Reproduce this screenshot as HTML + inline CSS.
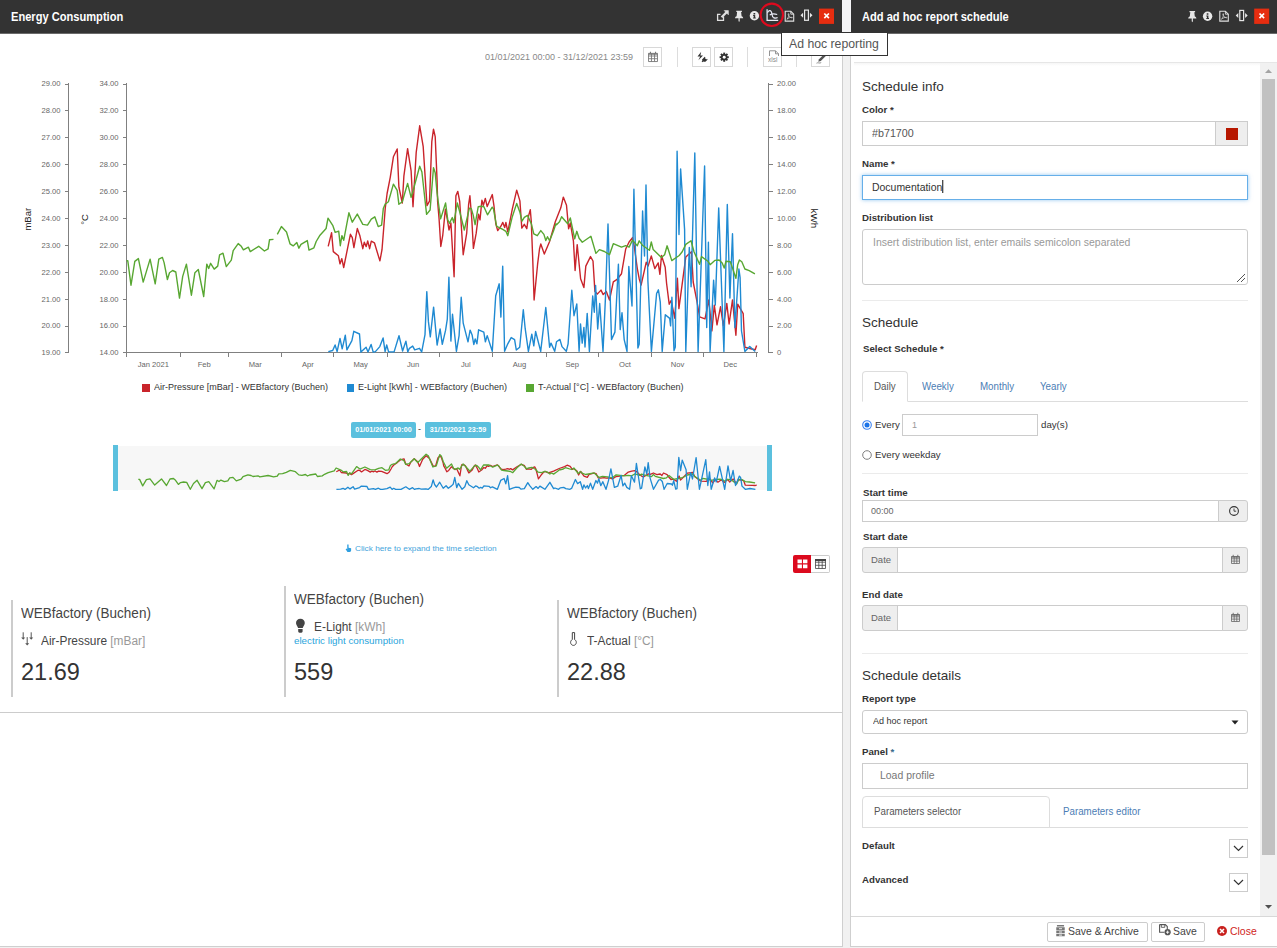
<!DOCTYPE html>
<html><head><meta charset="utf-8">
<style>
*{box-sizing:border-box;margin:0;padding:0}
html,body{width:1277px;height:948px;overflow:hidden;background:#f1f1f1;font-family:"Liberation Sans",sans-serif;}
.abs{position:absolute}
#left{position:absolute;left:0;top:0;width:843px;height:947px;background:#fff;border-right:1px solid #cfcfcf;border-bottom:1px solid #cfcfcf}
#gut{position:absolute;left:843px;top:0;width:7px;height:948px;background:#f1f1f1}
#right{position:absolute;left:850px;top:0;width:427px;height:948px;background:#fff;border-left:1px solid #cfcfcf}
.hdr span{transform:scaleX(.925);transform-origin:0 50%}

.sx{display:inline-block;transform:scaleX(.95);transform-origin:0 50%}
.tab{transform:scaleX(.975);transform-origin:0 50%}
.sm{transform:scaleX(1.02);transform-origin:0 50%}
.btn{transform:scaleX(.95);transform-origin:0 50%}
.hdr{position:absolute;left:0;top:0;height:33px;background:#333333;color:#fff;font-weight:bold;font-size:12px;line-height:33px}
.t{position:absolute;white-space:nowrap}
.lbl{margin-top:0;position:absolute;font-size:9.700px;font-weight:bold;color:#333;white-space:nowrap;line-height:12px}
.h4{position:absolute;font-size:13.500px;color:#333;white-space:nowrap;line-height:18px}
.inp{position:absolute;border:1px solid #ccc;background:#fff;font-size:11px;color:#555;white-space:nowrap}
.addon{position:absolute;border:1px solid #ccc;background:#eee}
.hr{position:absolute;height:1px;background:#ebebeb}
.tb{position:absolute;width:19px;height:20px;border:1px solid #d8d8d8;background:#fff;top:47px}
.sep{position:absolute;width:1px;background:#ddd;top:47px;height:20px}
.tab{font-size:10px;line-height:12px}
.sm{font-size:9.500px;line-height:12px;color:#333}
.btn{font-size:11px;line-height:14px;color:#444}
.lg{font-size:9.5px;line-height:12px;color:#333;transform:scaleX(.95);transform-origin:0 50%}
.badge{background:#5bc0de;border-radius:2px;color:#fff;font-weight:bold;font-size:7.200px;line-height:16px;text-align:center;white-space:nowrap}
.c1{margin-top:1px;font-size:14px;line-height:17px;color:#444;transform:scaleX(.965);transform-origin:0 50%}
.c2{margin-top:1px;font-size:12px;line-height:15px;color:#444;transform:scaleX(.99);transform-origin:0 50%}
.c3{margin-top:1px;font-size:23.5px;line-height:28px;color:#333}
</style></head><body>
<div id="left">
  <div class="hdr" style="width:842px"><span class="t" style="left:11px;top:1px">Energy Consumption</span></div>
  <!--LC_START-->
  <div id="licons"></div>
  <!-- toolbar -->
  <div class="t" id="daterange" style="left:485px;top:51px;font-size:9.5px;line-height:11px;color:#888;transform:scaleX(.947);transform-origin:0 50%">01/01/2021 00:00 - 31/12/2021 23:59</div>
  <div class="tb" style="left:643px"><svg class="abs" style="left:4px;top:3px" width="10" height="12" viewBox="0 0 11 13"><path d="M.5 2.500H10.500V11.500H.5z M.5 5.400H10.500 M.5 8.400H10.500 M3.800 2.500V11.500 M7.200 2.500V11.500" stroke="#777" stroke-width="1" fill="none"/><path d="M.5 2.500H10.500V4H.5z" fill="#777"/><path d="M2.700.8V3M8.300.8V3" stroke="#777" stroke-width="1.200"/></svg></div>
  <div class="sep" style="left:677px"></div>
  <div class="tb" style="left:692px"><svg class="abs" style="left:3px;top:3px" width="13" height="13"><path d="M5.200.8 1.500 5.600H4.200L2.400 9.200 7 4.500H4.400z" fill="#333"/><path d="M6.300 8.200 8 6.500 8.800 5.700 9.500 6.400 8.900 7 10.300 8.400 11 7.800 11.600 8.500 10 10.200C9.200 11 8 11 7.200 10.400L6.300 11.300 5.600 10.600 6.500 9.700C6 9.300 6 8.600 6.300 8.200z" fill="#333"/></svg></div>
  <div class="tb" style="left:714px"><svg class="abs" style="left:3.500px;top:4px" width="10.400" height="10.400" viewBox="-6 -6 12 12"><g fill="#333"><circle r="3.800"/><g id="gt"><rect x="-1.100" y="-5.300" width="2.200" height="10.600"/></g><use href="#gt" transform="rotate(45)"/><use href="#gt" transform="rotate(90)"/><use href="#gt" transform="rotate(135)"/></g><circle r="1.700" fill="#fff"/></svg></div>
  <div class="sep" style="left:747px"></div>
  <div class="tb" style="left:763px"><svg class="abs" style="left:4px;top:2px" width="12" height="14"><path d="M1.500 6V.8H7.500L10.500 3.800V6 M7.500.8V3.800H10.500" stroke="#888" stroke-width=".9" fill="none"/><text x="0" y="11.800" font-size="6.500" fill="#888" font-family="Liberation Sans, sans-serif">xlsl</text></svg></div>
  <div class="sep" style="left:796px"></div>
  <div class="tb" style="left:811px"><svg class="abs" style="left:3px;top:3px" width="13" height="13"><path d="M3.200 10.800 4 8.200 9.500 2.700 11.300 4.500 5.800 10z" fill="#555"/><path d="M1.500 12.200C3 11 4.500 12.800 6.200 11.600" stroke="#777" stroke-width=".8" fill="none"/></svg></div>

  <!-- main chart -->
  <svg id="chart" class="abs" style="left:0;top:70px" width="842" height="430" viewBox="0 70 842 430" font-family="Liberation Sans, sans-serif">
    <g id="axes" stroke="#808080" stroke-width="1" fill="none" shape-rendering="crispEdges">
      <path d="M68.5 83V352.5 M126.5 83V352.5 M768.5 83V352.5 M126 352.5H757.5"/>
      <g id="ticks"><path d="M64.5 84.5H68.5 M122.5 84.5H126.5 M768.5 84.5H772.5 M64.5 110.5H68.5 M122.5 110.5H126.5 M768.5 110.5H772.5 M64.5 137.5H68.5 M122.5 137.5H126.5 M768.5 137.5H772.5 M64.5 164.5H68.5 M122.5 164.5H126.5 M768.5 164.5H772.5 M64.5 191.5H68.5 M122.5 191.5H126.5 M768.5 191.5H772.5 M64.5 218.5H68.5 M122.5 218.5H126.5 M768.5 218.5H772.5 M64.5 245.5H68.5 M122.5 245.5H126.5 M768.5 245.5H772.5 M64.5 272.5H68.5 M122.5 272.5H126.5 M768.5 272.5H772.5 M64.5 299.5H68.5 M122.5 299.5H126.5 M768.5 299.5H772.5 M64.5 326.5H68.5 M122.5 326.5H126.5 M768.5 326.5H772.5 M64.5 352.5H68.5 M122.5 352.5H126.5 M768.5 352.5H772.5 M126.5 352.5V357 M180.5 352.5V357 M228.5 352.5V357 M281.5 352.5V357 M333.5 352.5V357 M387.5 352.5V357 M439.5 352.5V357 M492.5 352.5V357 M546.5 352.5V357 M598.5 352.5V357 M651.5 352.5V357 M703.5 352.5V357 M756.5 352.5V357"/></g>
    </g>
    <g id="axlabels" font-size="7.6" fill="#666"><text x="60.5" y="86.3" text-anchor="end">29.00</text><text x="118.5" y="86.3" text-anchor="end">34.00</text><text x="777" y="86.3">20.00</text><text x="60.5" y="113.2" text-anchor="end">28.00</text><text x="118.5" y="113.2" text-anchor="end">32.00</text><text x="777" y="113.2">18.00</text><text x="60.5" y="140.1" text-anchor="end">27.00</text><text x="118.5" y="140.1" text-anchor="end">30.00</text><text x="777" y="140.1">16.00</text><text x="60.5" y="167.0" text-anchor="end">26.00</text><text x="118.5" y="167.0" text-anchor="end">28.00</text><text x="777" y="167.0">14.00</text><text x="60.5" y="193.9" text-anchor="end">25.00</text><text x="118.5" y="193.9" text-anchor="end">26.00</text><text x="777" y="193.9">12.00</text><text x="60.5" y="220.8" text-anchor="end">24.00</text><text x="118.5" y="220.8" text-anchor="end">24.00</text><text x="777" y="220.8">10.00</text><text x="60.5" y="247.7" text-anchor="end">23.00</text><text x="118.5" y="247.7" text-anchor="end">22.00</text><text x="777" y="247.7">8.00</text><text x="60.5" y="274.6" text-anchor="end">22.00</text><text x="118.5" y="274.6" text-anchor="end">20.00</text><text x="777" y="274.6">6.00</text><text x="60.5" y="301.5" text-anchor="end">21.00</text><text x="118.5" y="301.5" text-anchor="end">18.00</text><text x="777" y="301.5">4.00</text><text x="60.5" y="328.4" text-anchor="end">20.00</text><text x="118.5" y="328.4" text-anchor="end">16.00</text><text x="777" y="328.4">2.00</text><text x="60.5" y="355.3" text-anchor="end">19.00</text><text x="118.5" y="355.3" text-anchor="end">14.00</text><text x="777" y="355.3">0</text><text x="153.3" y="367.3" text-anchor="middle">Jan 2021</text><text x="204.2" y="367.3" text-anchor="middle">Feb</text><text x="255.2" y="367.3" text-anchor="middle">Mar</text><text x="307.9" y="367.3" text-anchor="middle">Apr</text><text x="360.6" y="367.3" text-anchor="middle">May</text><text x="413.2" y="367.3" text-anchor="middle">Jun</text><text x="465.9" y="367.3" text-anchor="middle">Jul</text><text x="519.5" y="367.3" text-anchor="middle">Aug</text><text x="572.2" y="367.3" text-anchor="middle">Sep</text><text x="624.9" y="367.3" text-anchor="middle">Oct</text><text x="677.5" y="367.3" text-anchor="middle">Nov</text><text x="730.2" y="367.3" text-anchor="middle">Dec</text></g>
    <g id="series" fill="none" stroke-width="1.4" stroke-linejoin="round"><path d="M328.2 246.3 L331.6 232.7 L333.3 251.6 L338.4 255.8 L340.0 263.9 L341.8 258.6 L343.7 267.5 L350.4 234.3 L352.3 237.7 L353.9 247.6 L357.3 228.5 L359.9 235.8 L362.8 248.7 L364.3 242.2 L366.2 246.6 L367.7 240.9 L369.6 248.7 L371.3 241.1 L374.4 242.8 L379.9 260.9 L382.0 249.7 L383.9 225.7 L385.2 208.7 L387.1 193.5 L390.3 177.1 L393.4 156.8 L397.2 149.0 L398.9 187.2 L402.3 203.0 L403.9 175.8 L407.6 148.6 L411.1 170.8 L413.0 206.8 L416.2 152.4 L419.7 125.8 L423.2 146.7 L427.0 205.6 L429.5 201.1 L431.8 141.6 L433.5 129.2 L435.2 136.6 L437.1 180.9 L437.6 201.5 L439.1 219.2 L440.8 246.5 L442.7 235.7 L445.4 209.1 L447.3 219.2 L449.0 230.0 L450.9 223.0 L454.1 276.8 L455.9 195.8 L457.8 191.4 L459.7 201.5 L463.2 254.7 L466.7 233.2 L468.6 204.7 L469.9 195.8 L471.8 219.2 L473.4 248.4 L476.2 233.2 L478.5 214.2 L480.0 219.9 L481.9 200.3 L483.4 205.3 L485.3 198.4 L487.2 206.6 L492.3 194.6 L493.9 205.3 L495.8 223.7 L497.7 230.6 L500.9 226.2 L502.8 222.4 L504.7 227.5 L505.9 222.4 L507.8 231.9 L512.3 209.1 L516.7 190.1 L519.9 200.9 L521.8 228.1 L524.3 224.3 L526.8 228.7 L528.5 216.1 L530.3 209.7 L531.3 221.8 L532.8 261.0 L534.1 300.0 L537.6 264.2 L539.5 249.0 L540.8 243.9 L544.3 254.1 L549.6 241.4 L555.3 221.8 L560.8 207.8 L563.3 197.1 L566.5 205.3 L568.6 228.7 L570.3 223.0 L573.4 240.8 L575.1 270.5 L577.2 244.6 L580.6 278.7 L583.9 287.6 L585.8 266.1 L590.5 256.6 L593.0 261.0 L594.9 291.4 L597.5 293.9 L601.0 290.1 L603.2 294.6 L606.3 291.4 L609.5 300.0 L613.3 281.9 L617.1 279.4 L621.5 273.7 L625.7 249.0 L629.1 242.0 L632.5 237.6 L634.2 245.8 L637.3 268.6 L639.2 278.7 L641.1 285.1 L646.2 262.3 L648.1 266.1 L651.3 255.9 L654.8 268.6 L658.2 262.9 L659.9 274.3 L661.5 255.5 L665.2 267.3 L666.6 283.5 L669.2 304.2 L671.1 300.5 L674.8 318.2 L677.4 278.3 L678.9 308.6 L685.8 256.9 L691.5 251.8 L693.2 282.0 L696.9 301.2 L699.6 316.8 L705.0 318.9 L708.8 299.9 L711.9 330.9 L714.3 305.1 L717.0 324.9 L720.5 306.8 L723.4 325.8 L726.8 303.4 L729.1 324.0 L732.5 299.9 L735.9 335.2 L737.7 304.2 L743.2 313.7 L744.9 347.3 L751.8 349.0 L755.2 349.8 L756.6 345.5" stroke="#c9242b"/><path d="M328.3 351.6 L332.7 350.5 L335.1 345.0 L337.1 351.6 L340.0 338.4 L342.2 348.8 L345.3 335.1 L346.9 349.9 L351.9 340.6 L353.8 331.3 L359.5 334.0 L360.9 352.1 L366.1 347.2 L368.0 351.9 L371.1 344.4 L373.2 352.1 L375.4 351.6 L379.8 346.6 L383.1 337.9 L385.1 351.6 L386.7 345.0 L388.6 351.9 L394.1 351.9 L399.0 335.7 L402.6 351.0 L405.9 341.1 L407.8 351.9 L409.4 348.3 L412.7 346.1 L414.7 349.9 L419.5 348.3 L421.7 351.9 L425.0 334.6 L426.8 291.6 L428.4 321.4 L430.3 336.8 L433.6 307.1 L437.1 345.0 L440.1 328.9 L442.3 344.4 L445.6 330.2 L447.3 319.2 L448.9 277.3 L450.9 341.1 L452.5 314.3 L456.4 351.3 L459.1 335.6 L461.2 297.2 L463.2 323.2 L468.0 341.8 L470.1 330.1 L472.1 334.9 L473.8 344.5 L475.2 339.0 L476.9 343.8 L478.6 329.8 L483.8 332.2 L485.4 341.8 L487.2 335.6 L492.3 351.3 L495.7 295.8 L499.2 283.8 L500.9 317.1 L502.7 266.3 L504.6 351.3 L507.8 343.8 L511.2 337.6 L514.6 339.7 L516.3 350.0 L519.7 347.2 L523.3 309.8 L525.2 328.7 L528.4 351.3 L531.8 334.2 L533.8 345.9 L535.6 331.5 L540.7 351.3 L545.8 307.5 L549.6 347.2 L551.0 343.1 L554.7 351.3 L556.5 341.8 L559.9 339.4 L562.0 346.6 L566.3 351.3 L568.1 343.8 L571.8 290.3 L574.0 315.7 L576.8 304.0 L579.1 351.3 L580.5 323.9 L582.2 343.1 L583.9 327.4 L585 347 L587.2 313.4 L589.4 351.4 L592.7 296 L594.3 312.2 L595.6 285.4 L597.7 329 L599.7 303.5 L603 351.4 L605.5 296.6 L608 224 L611.5 339.6 L614.9 332.1 L618.4 264.3 L620.2 329.6 L622 312.8 L624.2 339.6 L627 351.4 L628.8 266.4 L632 306 L633.9 189.2 L637.9 348 L639.2 344 L642.6 211 L644.5 256 L646 185 L647.9 281 L651.4 351.4 L656.6 293.5 L658.4 289.8 L660.3 302.2 L662.2 351.4 L665.3 314.7 L669.7 318.4 L670.6 325.9 L671.9 297.3 L674 350.8 L675.3 347 L677.1 151.2 L679 234.6 L680.6 168.9 L684.6 229.6 L685.8 351.4 L689.3 247.5 L691.1 286.7 L694.8 153 L698.1 351.5 L704.6 166 L706.7 327.5 L708.4 242.3 L710.1 351.5 L713.6 280.2 L715.3 305 L718.7 207.9 L723.9 351.5 L727.3 204.5 L729.9 298 L732.5 233.7 L734.9 327.5 L738.9 269 L740.1 277.6 L741.5 331 L744.9 351.5 L749.7 346.4 L755.2 351.5" stroke="#1f8ad2"/><path d="M126.5 260.8 L127.8 260.8 L131.0 285.2 L134.8 261.4 L138.4 258.6 L143.2 282.1 L150.1 259.1 L155.2 283.9 L158.8 259.2 L162.4 257.4 L164.1 262.6 L167.4 279.5 L169.5 272.7 L172.6 270.5 L175.8 272.0 L179.5 298.1 L182.7 276.4 L186.4 264.1 L191.4 295.2 L194.9 272.7 L198.3 269.5 L203.7 296.5 L206.8 264.1 L208.7 268.6 L210.6 263.3 L214.2 269.1 L217.7 266.1 L219.6 254.9 L223.0 253.2 L226.3 266.6 L231.3 260.1 L233.2 250.7 L238.2 243.6 L241.3 246.3 L243.4 249.8 L248.4 247.2 L250.3 251.6 L258.7 246.3 L264.4 251.0 L268.1 248.8 L269.5 239.8 L273.5 239.4" stroke="#58a732"/><path d="M277.3 234.3 L281.4 226.6 L286.5 232.0 L290.0 243.8 L293.2 245.9 L296.8 242.4 L298.9 248.2 L301.0 244.4 L307.3 240.6 L309.0 250.1 L313.9 247.8 L316.2 241.5 L320.0 235.2 L326.1 228.5 L328.0 218.1 L332.9 225.7 L335.2 232.4 L338.7 231.1 L340.3 245.7 L341.9 235.6 L343.7 240.3 L348.9 212.8 L352.3 222.2 L357.3 214.1 L362.8 224.4 L367.5 225.1 L371.3 219.1 L374.8 216.8 L378.2 226.6 L381.6 225.1 L383.3 208.6 L385.2 203.9 L385.8 203.7 L388.4 201.8 L393.4 184.1 L397.2 190.4 L398.9 204.3 L402.3 201.8 L407.6 183.4 L411.1 197.3 L413.0 191.0 L419.7 166.3 L421.9 172.0 L426.6 214.4 L430.1 210.0 L433.5 167.6 L435.2 172.7 L437.1 193.5 L440.6 218.9 L445.6 203.0 L447.8 220.1 L449.7 223.3 L451.0 220.1 L452.3 217.6 L453.8 222.7 L457.3 203.0 L459.9 212.5 L464.3 230.0 L469.4 208.1 L471.3 208.7 L473.2 215.1 L475.1 224.6 L478.2 206.8 L481.4 206.2 L483.9 206.8 L487.5 214.8 L492.2 207.2 L493.4 208.7 L496.6 226.2 L499.0 227.5 L502.8 229.4 L505.9 231.3 L507.8 235.7 L512.3 216.7 L516.7 203.4 L519.9 212.3 L522.0 221.1 L524.3 217.3 L527.5 215.4 L531.3 223.7 L533.8 233.8 L537.3 235.7 L540.8 230.6 L543.9 234.4 L545.8 240.5 L547.5 236.7 L549.6 240.8 L553.4 231.3 L555.9 223.7 L556.3 224.9 L559.5 221.8 L561.6 216.7 L567.7 223.7 L570.3 218.0 L574.7 238.9 L576.8 231.3 L579.1 238.2 L582.3 242.3 L590.9 236.3 L595.9 253.4 L599.4 249.6 L604.4 251.5 L609.5 254.7 L613.3 243.7 L621.5 247.1 L625.7 245.6 L629.1 247.1 L632.5 240.1 L637.3 245.8 L639.2 240.8 L642.4 245.2 L649.4 250.3 L651.3 242.0 L653.2 249.6 L661.4 257.5 L664.6 254.7 L667.1 245.8 L671.8 260.6 L679.2 255.5 L682.2 251.8 L685.8 244.4 L691.0 240.7 L694.0 251.8 L699.6 264.3 L701.5 256.6 L707.9 261.2 L710.1 264.7 L714.8 260.4 L719.1 260.0 L722.2 263.0 L724.2 268.1 L726.0 261.2 L730.3 261.8 L732.5 268.1 L735.9 278.4 L737.7 264.7 L739.4 260.0 L741.8 261.8 L744.9 269.0 L749.2 270.7 L754.9 273.8" stroke="#58a732"/></g>
    <g id="axtitles" font-size="9.500" fill="#222"><text transform="translate(31.100,219.200) rotate(-90)" text-anchor="middle">mBar</text><text transform="translate(87.900,219.400) rotate(-90)" text-anchor="middle">°C</text><text transform="translate(811,218.300) rotate(90)" text-anchor="middle" font-size="9.800">kWh</text></g>
    <g id="nav"></g>
  </svg>

  <!-- legend -->
  <div class="abs" style="left:142.300px;top:384px;width:7.600px;height:7.800px;background:#c9242b"></div>
  <div class="t lg" style="left:154px;top:381px">Air-Pressure [mBar] - WEBfactory (Buchen)</div>
  <div class="abs" style="left:346.900px;top:384px;width:7.600px;height:7.800px;background:#1f8ad2"></div>
  <div class="t lg" style="left:358px;top:381px">E-Light [kWh] - WEBfactory (Buchen)</div>
  <div class="abs" style="left:526px;top:384px;width:7.600px;height:7.800px;background:#58a732"></div>
  <div class="t lg" style="left:538px;top:381px">T-Actual [°C] - WEBfactory (Buchen)</div>

  <!-- range badges -->
  <div class="abs badge" style="left:351px;top:422px;width:65px;height:16px"><span>01/01/2021 00:00</span></div>
  <div class="t" style="left:418px;top:423px;font-size:9px;color:#333;line-height:12px">-</div>
  <div class="abs badge" style="left:425px;top:422px;width:66px;height:16px"><span>31/12/2021 23:59</span></div>

  <!-- navigator -->
  <div class="abs" style="left:117px;top:446px;width:650px;height:44px;background:#f7f7f7"></div>
  <div class="abs" style="left:113px;top:445px;width:5px;height:46px;background:#5bc0de"></div>
  <div class="abs" style="left:767px;top:445px;width:5px;height:46px;background:#5bc0de"></div>
  <svg id="navsvg" class="abs" style="left:0;top:440px" width="842" height="60" viewBox="0 440 842 60"><g id="navseries" fill="none" stroke-width="1.3" stroke-linejoin="round"><path d="M336.3 471.8 L339.6 470.0 L341.3 472.5 L346.3 473.0 L347.9 474.1 L349.6 473.4 L351.5 474.6 L358.1 470.2 L359.9 470.6 L361.5 471.9 L364.9 469.4 L367.4 470.4 L370.3 472.1 L371.7 471.2 L373.6 471.8 L375.1 471.0 L376.9 472.1 L378.6 471.1 L381.6 471.3 L387.0 473.7 L389.1 472.2 L391.0 469.0 L392.2 466.8 L394.1 464.7 L397.2 462.6 L400.3 459.9 L404.0 458.8 L405.7 463.9 L409.0 466.0 L410.6 462.4 L414.2 458.8 L417.7 461.7 L419.5 466.5 L422.7 459.3 L426.1 455.7 L429.5 458.5 L433.3 466.4 L435.7 465.8 L438.0 457.8 L439.7 456.2 L441.3 457.2 L443.2 463.1 L443.7 465.8 L445.1 468.2 L446.8 471.8 L448.7 470.4 L451.3 466.8 L453.2 468.2 L454.9 469.6 L456.7 468.7 L459.9 475.8 L461.6 465.0 L463.5 464.5 L465.4 465.8 L468.8 472.9 L472.2 470.0 L474.1 466.2 L475.4 465.0 L477.2 468.2 L478.8 472.0 L481.6 470.0 L483.8 467.5 L485.3 468.3 L487.2 465.6 L488.6 466.3 L490.5 465.4 L492.4 466.5 L497.4 464.9 L498.9 466.3 L500.8 468.8 L502.7 469.7 L505.8 469.1 L507.7 468.6 L509.5 469.3 L510.7 468.6 L512.6 469.9 L517.0 466.8 L521.3 464.3 L524.5 465.7 L526.3 469.3 L528.8 468.8 L531.2 469.4 L532.9 467.7 L534.7 466.9 L535.7 468.5 L537.1 473.7 L538.4 478.9 L541.8 474.2 L543.7 472.1 L545.0 471.4 L548.4 472.8 L553.6 471.1 L559.2 468.5 L564.6 466.6 L567.1 465.2 L570.2 466.3 L572.3 469.4 L573.9 468.7 L577.0 471.0 L578.6 475.0 L580.7 471.5 L584.0 476.1 L587.3 477.3 L589.1 474.4 L593.8 473.1 L596.2 473.7 L598.1 477.8 L600.6 478.1 L604.1 477.6 L606.2 478.2 L609.3 477.8 L612.4 478.9 L616.1 476.5 L619.9 476.2 L624.2 475.4 L628.3 472.1 L631.7 471.2 L635.0 470.6 L636.7 471.7 L639.7 474.7 L641.6 476.1 L643.4 476.9 L648.4 473.9 L650.3 474.4 L653.4 473.0 L656.9 474.7 L660.2 474.0 L661.9 475.5 L663.5 473.0 L667.1 474.6 L668.5 476.7 L671.0 479.5 L672.9 479.0 L676.5 481.3 L679.1 476.0 L680.5 480.1 L687.3 473.2 L692.9 472.5 L694.6 476.5 L698.2 479.1 L700.9 481.2 L706.2 481.4 L709.9 478.9 L712.9 483.0 L715.3 479.6 L717.9 482.2 L721.4 479.8 L724.2 482.4 L727.6 479.4 L729.8 482.1 L733.1 478.9 L736.5 483.6 L738.3 479.5 L743.7 480.7 L745.3 485.2 L752.1 485.4 L755.4 485.5 L756.8 485.0" stroke="#c9242b"/><path d="M138.3 479.4 L139.6 479.4 L142.7 485.9 L146.4 479.6 L150.0 478.8 L154.7 485.1 L161.5 478.9 L166.5 485.5 L170.0 479.0 L173.5 478.5 L175.2 479.9 L178.4 484.4 L180.5 482.6 L183.6 482.0 L186.7 482.4 L190.3 489.3 L193.5 483.5 L197.1 480.3 L202.0 488.6 L205.4 482.6 L208.8 481.7 L214.1 488.9 L217.1 480.3 L219.0 481.5 L220.9 480.1 L224.4 481.6 L227.8 480.8 L229.7 477.8 L233.0 477.4 L236.3 480.9 L241.2 479.2 L243.0 476.7 L247.9 474.8 L251.0 475.5 L253.0 476.5 L258.0 475.8 L259.8 476.9 L268.1 475.5 L273.7 476.8 L277.3 476.2 L278.7 473.8 L282.6 473.7 L286.3 472.3 L290.3 470.3 L295.4 471.7 L298.8 474.9 L301.9 475.4 L305.5 474.5 L307.5 476.0 L309.6 475.0 L315.8 474.0 L317.4 476.5 L322.3 475.9 L324.5 474.3 L328.2 472.6 L334.2 470.8 L336.1 468.0 L340.9 470.1 L343.2 471.8 L346.6 471.5 L348.2 475.4 L349.7 472.7 L351.5 473.9 L356.6 466.6 L359.9 469.1 L364.9 467.0 L370.3 469.7 L374.9 469.9 L378.6 468.3 L382.0 467.7 L385.4 470.3 L388.7 469.9 L390.4 465.5 L392.2 464.3 L392.8 464.2 L395.4 463.7 L400.3 459.0 L404.0 460.7 L405.7 464.4 L409.0 463.7 L414.2 458.8 L417.7 462.5 L419.5 460.8 L426.1 454.2 L428.3 455.8 L432.9 467.0 L436.3 465.9 L439.7 454.6 L441.3 455.9 L443.2 461.5 L446.6 468.2 L451.5 464.0 L453.7 468.6 L455.6 469.4 L456.8 468.6 L458.1 467.9 L459.6 469.3 L463.0 464.0 L465.6 466.5 L469.9 471.2 L474.9 465.4 L476.8 465.5 L478.6 467.2 L480.5 469.8 L483.5 465.0 L486.7 464.9 L489.1 465.0 L492.7 467.2 L497.3 465.1 L498.4 465.5 L501.6 470.2 L503.9 470.5 L507.7 471.0 L510.7 471.5 L512.6 472.7 L517.0 467.7 L521.3 464.1 L524.5 466.5 L526.5 468.8 L528.8 467.8 L531.9 467.3 L535.7 469.5 L538.1 472.2 L541.5 472.7 L545.0 471.4 L548.0 472.4 L549.9 474.0 L551.6 473.0 L553.6 474.1 L557.3 471.5 L559.8 469.5 L560.2 469.8 L563.3 469.0 L565.4 467.7 L571.4 469.5 L573.9 468.0 L578.3 473.6 L580.3 471.5 L582.6 473.4 L585.7 474.5 L594.2 472.9 L599.1 477.4 L602.5 476.4 L607.4 476.9 L612.4 477.8 L616.1 474.8 L624.2 475.8 L628.3 475.4 L631.7 475.8 L635.0 473.9 L639.7 475.4 L641.6 474.1 L644.7 475.2 L651.6 476.6 L653.4 474.4 L655.3 476.4 L663.4 478.5 L666.5 477.8 L669.0 475.4 L673.6 479.3 L680.8 478.0 L683.8 477.0 L687.3 475.0 L692.4 474.0 L695.4 477.0 L700.9 480.3 L702.7 478.3 L709.0 479.5 L711.2 480.4 L715.8 479.3 L720.0 479.2 L723.0 480.0 L725.0 481.3 L726.8 479.5 L731.0 479.7 L733.1 481.3 L736.5 484.1 L738.3 480.4 L739.9 479.2 L742.3 479.7 L745.3 481.6 L749.5 482.0 L755.1 482.9" stroke="#58a732"/><path d="M336.4 489.4 L340.7 489.2 L343.1 488.3 L345.0 489.4 L347.9 487.2 L350.0 488.9 L353.1 486.7 L354.6 489.1 L359.6 487.6 L361.4 486.1 L367.0 486.5 L368.4 489.4 L373.5 488.7 L375.4 489.4 L378.4 488.2 L380.5 489.4 L382.6 489.4 L386.9 488.6 L390.2 487.2 L392.1 489.4 L393.7 488.3 L395.6 489.4 L401.0 489.4 L405.8 486.8 L409.3 489.3 L412.6 487.7 L414.4 489.4 L416.0 488.8 L419.2 488.5 L421.2 489.1 L425.9 488.8 L428.1 489.4 L431.3 486.6 L433.1 479.8 L434.6 484.5 L436.5 487.0 L439.7 482.2 L443.2 488.3 L446.1 485.7 L448.3 488.2 L451.5 485.9 L453.2 484.2 L454.8 477.5 L456.7 487.7 L458.3 483.4 L462.1 489.3 L464.8 486.8 L466.8 480.7 L468.8 484.8 L473.5 487.8 L475.6 485.9 L477.5 486.7 L479.2 488.2 L480.6 487.3 L482.3 488.1 L483.9 485.9 L489.0 486.3 L490.6 487.8 L492.4 486.8 L497.4 489.3 L500.7 480.4 L504.1 478.5 L505.8 483.8 L507.6 475.7 L509.4 489.3 L512.6 488.1 L515.9 487.1 L519.3 487.5 L520.9 489.1 L524.3 488.7 L527.8 482.7 L529.7 485.7 L532.8 489.3 L536.1 486.6 L538.1 488.4 L539.9 486.1 L544.9 489.3 L549.9 482.3 L553.6 488.7 L555.0 488.0 L558.6 489.3 L560.4 487.8 L563.7 487.4 L565.8 488.6 L570.0 489.3 L571.8 488.1 L575.4 479.5 L577.6 483.6 L580.3 481.7 L582.6 489.3 L583.9 484.9 L585.6 488.0 L587.3 485.5 L588.4 488.6 L590.5 483.2 L592.7 489.3 L595.9 480.5 L597.5 483.1 L598.8 478.8 L600.8 485.7 L602.8 481.7 L606.0 489.3 L608.5 480.6 L610.9 468.9 L614.4 487.4 L617.7 486.2 L621.1 475.4 L622.9 485.8 L624.7 483.1 L626.8 487.4 L629.6 489.3 L631.4 475.7 L634.5 482.1 L636.4 463.4 L640.3 488.8 L641.6 488.1 L644.9 466.9 L646.8 474.1 L648.2 462.7 L650.1 478.1 L653.5 489.3 L658.6 480.1 L660.4 479.5 L662.3 481.5 L664.1 489.3 L667.2 483.5 L671.5 484.0 L672.4 485.2 L673.7 480.7 L675.7 489.2 L677.0 488.6 L678.8 457.3 L680.6 470.6 L682.2 460.1 L686.1 469.8 L687.3 489.3 L690.7 472.7 L692.5 479.0 L696.1 457.6 L699.4 489.3 L705.8 459.7 L707.8 485.5 L709.5 471.9 L711.2 489.3 L714.6 477.9 L716.3 481.9 L719.6 466.4 L724.7 489.3 L728.0 465.8 L730.6 480.8 L733.1 470.5 L735.5 485.5 L739.4 476.1 L740.6 477.5 L742.0 486.1 L745.3 489.3 L750.0 488.5 L755.4 489.3" stroke="#1f8ad2"/></g></svg>

  <div class="t" style="left:355px;top:543.500px;font-size:8px;line-height:10px;color:#45a5dc;transform:scaleX(1.031);transform-origin:0 50%">Click here to expand the time selection</div>
  <svg class="abs" style="left:345px;top:544px" width="7" height="8.500" viewBox="0 0 8 10"><path d="M2.500.5h1.600v4l3 .6v2.500l-1 1.900H2.800L.600 6.200l1-.8.900.9z" fill="#2f9fe0"/></svg>

  <!-- view toggle -->
  <div class="abs" style="left:793px;top:555px;width:19px;height:18px;background:#dc0a1e;border-radius:2px 0 0 2px"><svg class="abs" style="left:4px;top:4px" width="11" height="10"><path d="M0.5 0.5h4.4v3.8H0.5zM6 0.5h4.4v3.8H6zM0.5 5.4h4.4v3.8H0.5zM6 5.4h4.4v3.8H6z" fill="#fff"/></svg></div>
  <div class="abs" style="left:811px;top:555px;width:19px;height:18px;background:#fff;border:1px solid #ccc;border-left:0;border-radius:0 2px 2px 0"><svg class="abs" style="left:4px;top:3px" width="11" height="10"><path d="M0.5 0.5H10.5V9.5H0.5Z M0.5 3.2H10.5 M0.5 6.3H10.5 M3.8 0.5V9.5 M7.2 0.5V9.5" stroke="#444" stroke-width=".8" fill="none"/><path d="M0 0h11v2H0z" fill="#444"/></svg></div>

  <!-- cards -->
  <svg class="abs" style="left:20px;top:631px" width="15" height="16"><g stroke="#555" stroke-width="1" fill="#555"><path d="M3.200 1.300V7.500" fill="none"/><path d="M1.200 6.500H5.200L3.200 8.800z" stroke="none"/><path d="M7.200 6.100V13.200" fill="none"/><path d="M5.200 12.200H9.200L7.200 14.500z" stroke="none"/><path d="M11.200 1.300V7.500" fill="none"/><path d="M9.200 6.500H13.200L11.200 8.800z" stroke="none"/></g></svg>
  <svg class="abs" style="left:295px;top:618px" width="12" height="16"><path d="M5.400.8C8 .8 9.800 2.700 9.800 5.100 9.800 7 8.300 8.200 7.700 10H3.100C2.500 8.200 1 7 1 5.100 1 2.700 2.800.8 5.400.8z" fill="#444"/><path d="M3.200 11H7.600V13.200C7.600 14.200 6.600 14.700 5.400 14.700 4.200 14.700 3.200 14.200 3.200 13.200z" fill="#444"/></svg>
  <svg class="abs" style="left:568px;top:631px" width="12" height="16"><path d="M4.300 8.600V1.600H6.600V8.600C7.700 9.100 8.300 10.200 8.300 11.400 8.300 13 7 14.400 5.450 14.400 3.900 14.400 2.600 13 2.600 11.400 2.600 10.200 3.200 9.100 4.300 8.600z" fill="none" stroke="#444" stroke-width="1"/></svg>

  <div class="abs" style="left:11px;top:600px;width:2px;height:97px;background:#ccc"></div>
  <div class="t c1" style="left:21px;top:604px">WEBfactory (Buchen)</div>
  <div class="t c2" style="left:41px;top:633px">Air-Pressure <span style="color:#999">[mBar]</span></div>
  <div class="t c3" style="left:21px;top:657px">21.69</div>

  <div class="abs" style="left:284px;top:586px;width:2px;height:111px;background:#ccc"></div>
  <div class="t c1" style="left:294px;top:590px">WEBfactory (Buchen)</div>
  <div class="t c2" style="left:314px;top:619px">E-Light <span style="color:#999">[kWh]</span></div>
  <div class="t" style="left:294px;top:635px;font-size:9.5px;line-height:11px;color:#2aa5dc;transform:scaleX(1.03);transform-origin:0 50%">electric light consumption</div>
  <div class="t c3" style="left:294px;top:657px">559</div>

  <div class="abs" style="left:557px;top:600px;width:2px;height:97px;background:#ccc"></div>
  <div class="t c1" style="left:567px;top:604px">WEBfactory (Buchen)</div>
  <div class="t c2" style="left:587px;top:633px">T-Actual <span style="color:#999">[°C]</span></div>
  <div class="t c3" style="left:567px;top:657px">22.88</div>

  <div class="abs" style="left:0;top:712px;width:842px;height:1px;background:#ccc"></div>
<!--LC_END-->
</div>
<div id="gut"></div>

<div id="right">
  <div class="hdr" style="left:0;width:426px"><span class="t" style="left:11px;top:1px">Add ad hoc report schedule</span></div>
  <!--RC_START-->
  <!-- header icons right -->
  <div id="ricons"></div>
  <div class="abs" style="left:3px;top:62px;width:423px;height:4px;background:linear-gradient(#e6e6e6,#e6e6e6 1px,#f6f6f6 1px,#fff 4px)"></div>
  <!-- scrollbar -->
  <div class="abs" style="left:409px;top:63px;width:17px;height:853px;background:#f1f1f1"></div>
  <div class="abs" style="left:411px;top:79px;width:13px;height:776px;background:#c1c1c1"></div>
  <svg class="abs" style="left:409px;top:63px" width="17" height="16"><path d="M5 10 L8.500 6.200 L12 10Z" fill="#a3a3a3"/></svg>
  <svg class="abs" style="left:409px;top:899px" width="17" height="16"><path d="M5 6 L8.500 9.800 L12 6Z" fill="#505050"/></svg>

  <div class="h4" id="h_info" style="left:11px;top:78px">Schedule info</div>
  <div class="lbl" style="left:11px;top:104px">Color <span style="color:#333">*</span></div>
  <div class="inp" style="left:11px;top:121px;width:354px;height:25px;line-height:23px;padding-left:9px;color:#555"><span class="sx" style="transform:scaleX(.975)">#b71700</span></div>
  <div class="addon" style="left:364px;top:121px;width:33px;height:25px"><div class="abs" style="left:10px;top:6px;width:12px;height:12px;background:#b71700"></div></div>

  <div class="lbl" style="left:11px;top:158px">Name <span>*</span></div>
  <div class="inp" style="left:11px;top:175px;width:386px;height:25px;line-height:23px;padding-left:9px;color:#333;border-color:#66afe9;box-shadow:0 0 4px rgba(102,175,233,.7)"><span class="sx">Documentation<span style="display:inline-block;width:1px;height:13px;background:#000;vertical-align:-2px"></span></span></div>

  <div class="lbl" style="left:11px;top:212px">Distribution list</div>
  <div class="inp" style="left:11px;top:229px;width:386px;height:56px;line-height:14px;padding:5px 0 0 10px;color:#999;border-radius:3px"><span class="sx">Insert distribution list, enter emails semicolon separated</span>
    <svg class="abs" style="right:1px;bottom:1px" width="10" height="10"><path d="M9 1 L1 9 M9 5 L5 9" stroke="#555" stroke-width="1" fill="none"/></svg></div>
  <div class="hr" style="left:11px;top:300px;width:386px"></div>

  <div class="h4" id="h_sched" style="left:11px;top:314px">Schedule</div>
  <div class="lbl" style="left:12px;top:343px">Select Schedule <span>*</span></div>
  <!-- tabs -->
  <div class="abs" style="left:11px;top:401px;width:386px;height:1px;background:#ddd"></div>
  <div class="abs" style="left:11px;top:371px;width:46px;height:31px;border:1px solid #ddd;border-bottom:1px solid #fff;border-radius:4px 4px 0 0;background:#fff"></div>
  <div class="t tab" style="left:23px;top:381px;color:#555">Daily</div>
  <div class="t tab" style="left:71px;top:381px;color:#4b7db5">Weekly</div>
  <div class="t tab" style="left:129px;top:381px;color:#4b7db5">Monthly</div>
  <div class="t tab" style="left:189px;top:381px;color:#4b7db5">Yearly</div>

  <svg class="abs" style="left:9px;top:418px" width="14" height="14"><circle cx="7" cy="7" r="4.300" fill="#fff" stroke="#3b82f0" stroke-width="1.100"/><circle cx="7" cy="7" r="2.500" fill="#1a73e8"/></svg>
  <div class="t sm" style="left:24px;top:419px">Every</div>
  <div class="inp" style="left:51px;top:414px;width:136px;height:22px;line-height:20px;padding-left:9px;color:#999;font-size:9.500px"><span class="sx">1</span></div>
  <div class="t sm" style="left:190px;top:419px">day(s)</div>
  <svg class="abs" style="left:9px;top:448px" width="14" height="14"><circle cx="7" cy="7" r="4.300" fill="#fff" stroke="#808080" stroke-width="1"/></svg>
  <div class="t sm" style="left:24px;top:449px">Every weekday</div>
  <div class="hr" style="left:11px;top:473px;width:386px"></div>

  <div class="lbl" style="left:12px;top:487px">Start time</div>
  <div class="inp" style="left:11px;top:500px;width:357px;height:22px;line-height:20px;padding-left:8px;color:#666;font-size:9.500px"><span class="sx">00:00</span></div>
  <div class="addon" style="left:367px;top:500px;width:30px;height:22px;border-radius:0 3px 3px 0"><svg class="abs" style="left:9px;top:4px" width="12" height="12"><circle cx="6" cy="6" r="4.400" fill="none" stroke="#333" stroke-width="1.100"/><path d="M6 3.500V6.200H8.200" stroke="#333" stroke-width=".9" fill="none"/></svg></div>

  <div class="lbl" style="left:12px;top:531px">Start date</div>
  <div class="addon" style="left:11px;top:547px;width:36px;height:26px;border-radius:3px 0 0 3px"></div>
  <div class="t" style="left:20px;top:554px;font-size:9.500px;color:#666">Date</div>
  <div class="inp" style="left:46px;top:547px;width:326px;height:26px"></div>
  <div class="addon cal" style="left:371px;top:547px;width:26px;height:26px;border-radius:0 3px 3px 0"><svg class="abs" style="left:8px;top:6px" width="9" height="10"><path d="M.5 2.500H8.500V9.500H.5Z M.5 4.800H8.500 M.5 7.100H8.500 M3.200 2.500V9.500 M5.800 2.500V9.500" stroke="#666" stroke-width=".8" fill="none"/><path d="M.5 2.500H8.500V3.600H.5z" fill="#666"/><path d="M2.200.8V2.500M6.800.8V2.500" stroke="#666" stroke-width=".9"/></svg></div>

  <div class="lbl" style="left:11px;top:589px">End date</div>
  <div class="addon" style="left:11px;top:605px;width:36px;height:26px;border-radius:3px 0 0 3px"></div>
  <div class="t" style="left:20px;top:612px;font-size:9.500px;color:#666">Date</div>
  <div class="inp" style="left:46px;top:605px;width:326px;height:26px"></div>
  <div class="addon cal" style="left:371px;top:605px;width:26px;height:26px;border-radius:0 3px 3px 0"><svg class="abs" style="left:8px;top:6px" width="9" height="10"><path d="M.5 2.500H8.500V9.500H.5Z M.5 4.800H8.500 M.5 7.100H8.500 M3.200 2.500V9.500 M5.800 2.500V9.500" stroke="#666" stroke-width=".8" fill="none"/><path d="M.5 2.500H8.500V3.600H.5z" fill="#666"/><path d="M2.200.8V2.500M6.800.8V2.500" stroke="#666" stroke-width=".9"/></svg></div>
  <div class="hr" style="left:11px;top:653px;width:386px"></div>

  <div class="h4" id="h_det" style="left:11px;top:667px">Schedule details</div>
  <div class="lbl" style="left:11px;top:693px">Report type</div>
  <div class="inp" style="left:11px;top:710px;width:386px;height:24px;line-height:20px;padding-left:10px;color:#333;font-size:9.500px;border-radius:3px"><span class="sx">Ad hoc report</span><svg class="abs" style="right:8px;top:9px" width="8" height="5"><path d="M0.5 0.5H7.5L4 4.5Z" fill="#222"/></svg></div>
  <div class="lbl" style="left:11px;top:746px">Panel <span style="color:#3a6b8c">*</span></div>
  <div class="inp" style="left:11px;top:763px;width:386px;height:26px;line-height:23px;padding-left:17px;color:#777;font-size:11px"><span class="sx">Load profile</span></div>

  <div class="abs" style="left:11px;top:827px;width:386px;height:1px;background:#ddd"></div>
  <div class="abs" style="left:11px;top:796px;width:188px;height:32px;border:1px solid #ddd;border-radius:4px 4px 0 0;background:#fff"></div>
  <div class="t tab" style="left:23px;top:806px;color:#555">Parameters selector</div>
  <div class="t tab" style="left:212px;top:806px;color:#4b7db5">Parameters editor</div>

  <div class="lbl" style="left:11px;top:840px">Default</div>
  <div class="inp chev" style="left:378px;top:839px;width:19px;height:19px"><svg width="17" height="17"><path d="M4 6 L8.5 10.5 L13 6" stroke="#333" stroke-width="1.2" fill="none"/></svg></div>
  <div class="lbl" style="left:11px;top:874px">Advanced</div>
  <div class="inp chev" style="left:378px;top:873px;width:19px;height:19px"><svg width="17" height="17"><path d="M4 6 L8.5 10.5 L13 6" stroke="#333" stroke-width="1.2" fill="none"/></svg></div>

  <!-- footer -->
  <div class="abs" style="left:0;top:916px;width:426px;height:1px;background:#d8d8d8"></div>
  <div class="abs" style="left:-1px;top:946px;width:427px;height:1px;background:#cfcfcf"></div><div class="abs" style="left:-1px;top:947px;width:427px;height:1px;background:#f1f1f1"></div>
  <div class="inp" style="left:196px;top:922px;width:101px;height:20px;border-radius:2px"></div>
  <svg class="abs" style="left:205px;top:925px" width="9" height="12" viewBox="0 0 10 12" preserveAspectRatio="none"><g fill="#777"><rect x="1" y="0" width="8" height="1.500" rx=".5"/><path d="M.3 2.300H9.700V5H.3zM.3 5.600H9.700V8.300H.3zM.3 8.900H9.700V11.300H.3z"/></g><path d="M3.300 3.700H6.700M3.300 7H6.700M3.300 10.100H6.700" stroke="#fff" stroke-width=".9"/></svg>
  <div class="t btn" style="left:217px;top:924px">Save &amp; Archive</div>
  <div class="inp" style="left:300px;top:922px;width:54px;height:20px;border-radius:2px"></div>
  <svg class="abs" style="left:308px;top:924px" width="13" height="12"><path d="M.600.600H6.300L8.300 2.600V5.200M.600.600V8.300H5.200" fill="none" stroke="#555" stroke-width="1.100"/><path d="M2.300.8V3.300H5.800V.8" fill="none" stroke="#555" stroke-width=".9"/><circle cx="8.600" cy="8.200" r="3.100" fill="#555"/><path d="M8.600 6.600V9.800M7 8.200H10.200" stroke="#fff" stroke-width=".9"/></svg>
  <div class="t btn" style="left:322px;top:924px;transform:scaleX(.95)">Save</div>
  <svg class="abs" style="left:365px;top:925px" width="12" height="12"><circle cx="6" cy="6" r="5" fill="#c9211e"/><path d="M4 4L8 8M8 4L4 8" stroke="#fff" stroke-width="1.5"/></svg>
  <div class="t btn" style="left:379px;top:924px;color:#d0251c">Close</div>
<!--RC_END-->
</div>
<!--OV_START-->
<div class="abs" style="left:842px;top:0;width:9px;height:33px;background:#f5f5f7;z-index:4"></div>
<div class="abs" style="left:0;top:33px;width:842px;height:1px;background:#6a6a6a;z-index:4"></div><div class="abs" style="left:851px;top:33px;width:426px;height:1px;background:#6a6a6a;z-index:4"></div>
<svg class="abs" style="left:0;top:0;z-index:5" width="1277" height="34" viewBox="0 0 1277 34">
  <defs>
    <g id="i-pin"><path d="M1.3 0h5.6v1.2H6.1l.5 4.2c1 .4 1.6 1.1 1.6 2.1H4.7v2.8L4.1 11.2l-.6-.9V7.5H0C0 6.500.6 5.800 1.600 5.400l.5-4.200H1.300z" fill="#e6e6e6"/></g>
    <g id="i-info"><circle cx="0" cy="0" r="4.700" fill="#e9e9e9"/><path d="M-.9-2.900h1.700v1.500H-.9zM-1.300-.700H.800v2.500h.6v.9h-2.700v-.9h.6v-1.600h-.600z" fill="#333"/></g>
    <g id="i-pdf" fill="none" stroke="#e0e0e0" stroke-width="1.100"><path d="M.600.600H6.200L9.100 3.500V10.400H.600z"/><path d="M6.200.600V3.500H9.100" stroke-width=".9"/><path d="M2.300 8.600C3.800 6.800 4.500 4.800 4.300 3.300 4.200 2.700 3.500 2.800 3.600 3.600 3.800 5.200 5.300 6.800 7.300 7.200 8 7.300 8 6.600 7.200 6.600 5.600 6.600 3.600 7.300 2.300 8.600z" stroke-width=".7"/></g>
    <g id="i-arr"><path d="M0 5.700 2.600 3.200V8.200z M12 5.700 9.400 3.200V8.200z" fill="#e6e6e6"/><rect x="4.100" y=".6" width="3.800" height="10.200" fill="none" stroke="#e6e6e6" stroke-width="1.200"/></g>
    <g id="i-close"><rect x="0" y="0" width="15" height="15.300" fill="#e62d10"/><path d="M5.300 4.900 9.900 9.500M9.900 4.900 5.300 9.500" stroke="#fff" stroke-width="1.700"/></g>
  </defs>
  <!-- left header -->
  <g fill="none" stroke="#e0e0e0" stroke-width="1.300"><path d="M723.500 16.500V20.300H717.600V14.300H720.500"/><path d="M721.600 17.200 726.800 12" stroke-width="2.300"/><path d="M724.200 10.600H728.400V14.800z" fill="#e0e0e0" stroke-width=".6"/></g>
  <use href="#i-pin" x="735" y="10.800"/>
  <use href="#i-info" x="754.400" y="15.800"/>
  <circle cx="771.800" cy="14.800" r="11.200" fill="none" stroke="#de0a1e" stroke-width="2.100"/>
  <g fill="none" stroke="#e8eaf6" stroke-width="1.300"><path d="M767.100 9.200V20.300H778.200"/><path d="M767.400 12.600C768.800 10.300 770.300 10 771.300 11.800 772.300 13.600 771.700 16.500 773.500 17.600 775 18.300 776.800 18.100 777.600 17.600" stroke-width="1.200"/><path d="M769.700 14.900C771.500 13.900 774.500 13.600 777.200 14.600" stroke-width="1.100"/></g>
  <use href="#i-pdf" x="784.600" y="10.700"/>
  <use href="#i-arr" x="800.500" y="9.500"/>
  <use href="#i-close" x="819" y="8.600"/>
  <!-- right header -->
  <use href="#i-pin" x="1188.200" y="11"/>
  <use href="#i-info" x="1207.600" y="16.200"/>
  <use href="#i-pdf" x="1219.200" y="10.700"/>
  <use href="#i-arr" x="1235.700" y="9.800"/>
  <use href="#i-close" x="1254.200" y="8.600"/>
</svg>
<!-- tooltip -->
<div class="abs" style="left:781px;top:32px;width:107px;height:24px;background:#fff;border:1px solid #333;z-index:6"><span class="t" style="left:7px;top:4px;font-size:12.500px;line-height:14px;color:#555;transform:scaleX(.98);transform-origin:0 50%">Ad hoc reporting</span></div>
<!--OV_END-->
</body></html>
